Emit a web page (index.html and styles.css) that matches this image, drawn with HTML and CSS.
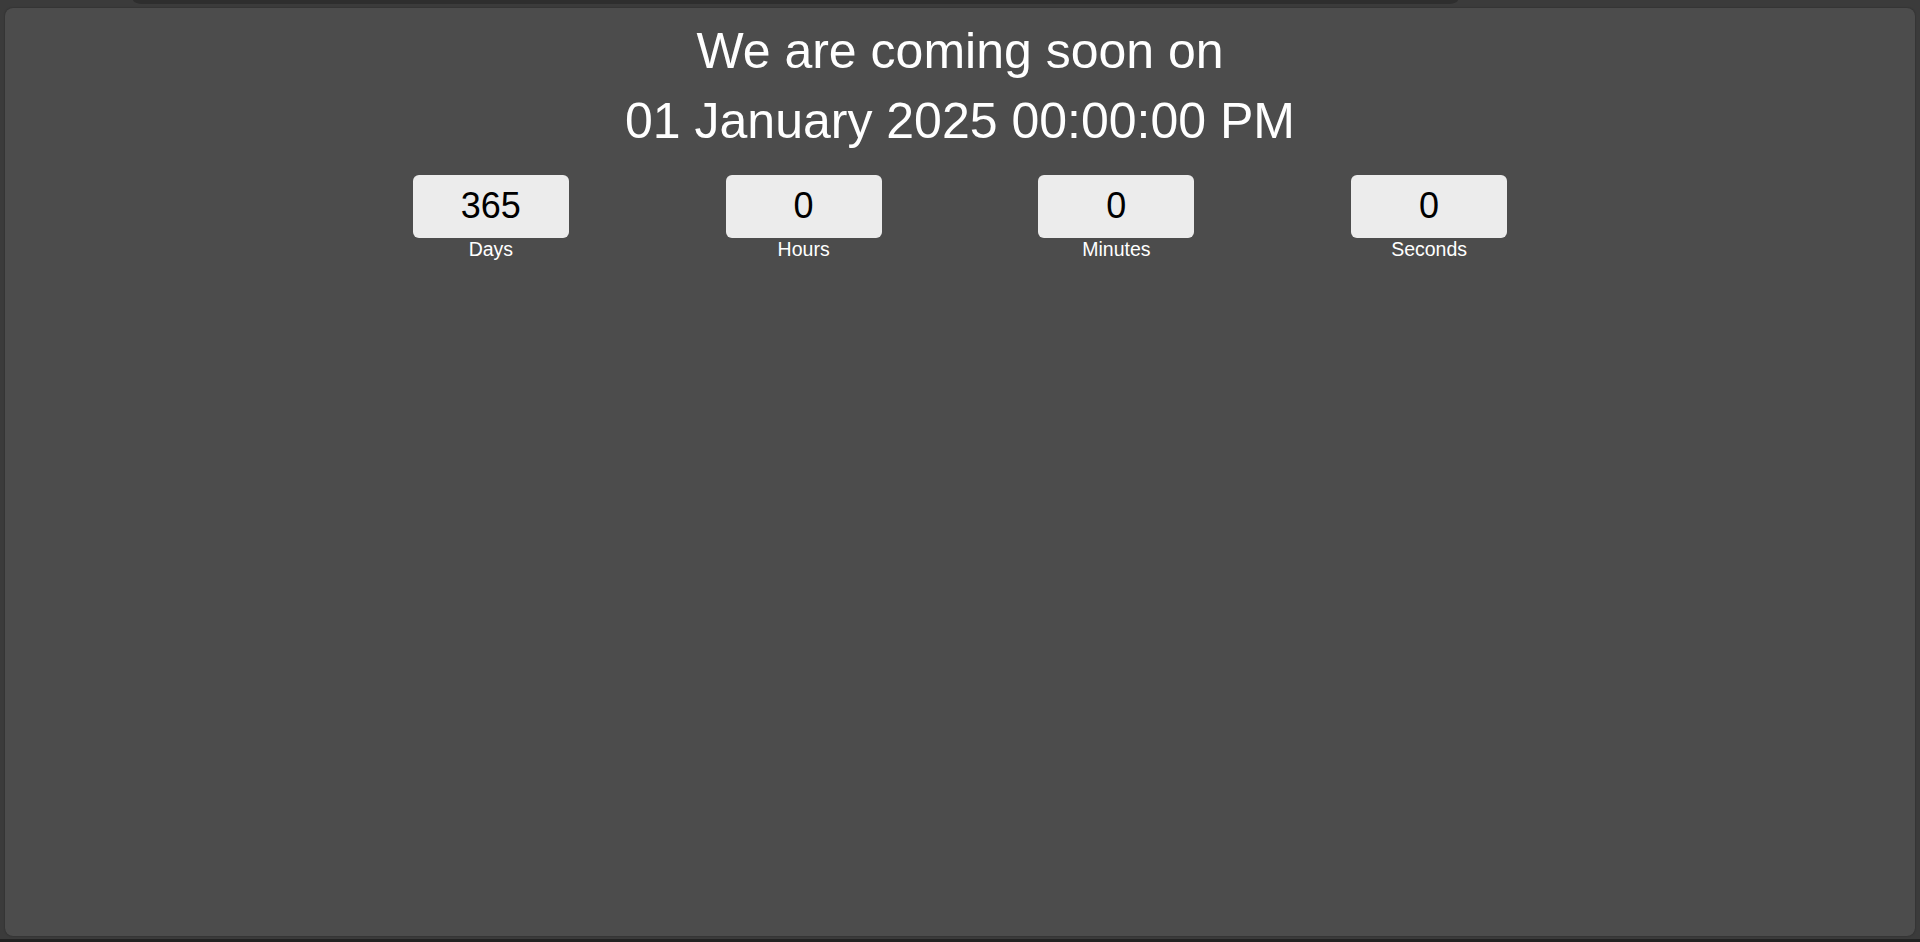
FILE: index.html
```html
<!DOCTYPE html>
<html lang="en">
<head>
<meta charset="utf-8">
<title>Coming soon</title>
<link rel="stylesheet" href="styles.css">
</head>
<body>
<div class="topbar"></div>
<main class="panel">
  <h1 class="title">We are coming soon on<br>01 January 2025 00:00:00 PM</h1>
  <div class="countdown">
    <div class="unit"><div class="box">365</div><div class="label">Days</div></div>
    <div class="unit"><div class="box">0</div><div class="label">Hours</div></div>
    <div class="unit"><div class="box">0</div><div class="label">Minutes</div></div>
    <div class="unit"><div class="box">0</div><div class="label">Seconds</div></div>
  </div>
</main>
<div class="bottombar"></div>
</body>
</html>
```
FILE: styles.css
```css
html, body {
  margin: 0;
  padding: 0;
  height: 942px;
  overflow: hidden;
}
body {
  background: #3b3b3b;
  font-family: "Liberation Sans", Arial, sans-serif;
  display: flex;
  flex-direction: column;
}
.topbar {
  height: 4px;
  width: 1325px;
  margin-left: 133px;
  background: #2e2e2e;
  border-radius: 0 0 10px 10px / 0 0 4px 4px;
  flex: none;
}
.panel {
  flex: none;
  height: 928px;
  margin: 4px 5px 3px 5px;
  box-sizing: border-box;
  background: #4c4c4c;
  border-radius: 8px;
  box-shadow: 0 0 2px rgba(0, 0, 0, 0.35);
  padding-top: 8px;
}
.title {
  margin: 0;
  font-size: 50px;
  font-weight: normal;
  line-height: 70px;
  color: #ffffff;
  text-align: center;
}
.countdown {
  width: 1251px;
  margin: 19px auto 0;
  display: grid;
  grid-template-columns: repeat(4, 1fr);
}
.unit {
  display: flex;
  flex-direction: column;
  align-items: center;
}
.box {
  width: 156px;
  height: 63px;
  box-sizing: border-box;
  padding-top: 10px;
  background: #ececec;
  border-radius: 6px;
  color: #000;
  font-size: 36px;
  line-height: 42px;
  text-align: center;
}
.label {
  color: #ffffff;
  font-size: 19.5px;
  line-height: normal;
}
.bottombar {
  flex: 1;
  background: #222222;
}
```
